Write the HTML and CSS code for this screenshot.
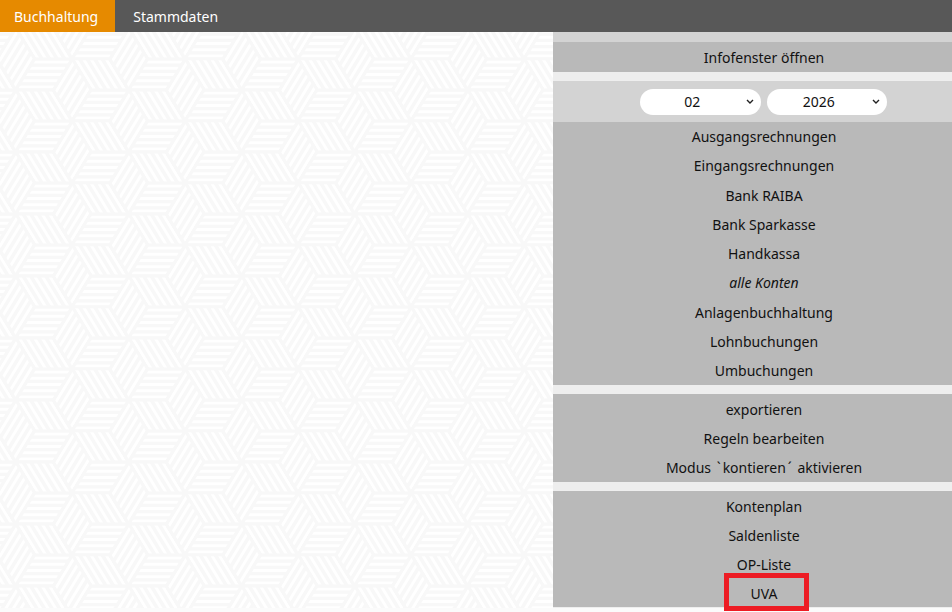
FILE: index.html
```html
<!DOCTYPE html>
<html lang="de">
<head>
<meta charset="utf-8">
<title>Buchhaltung</title>
<link rel="stylesheet" href="styles.css">
</head>
<body>
<nav class="topbar">
  <a class="tab tab-active">Buchhaltung</a>
  <a class="tab">Stammdaten</a>
</nav>
<main class="main">
  <div class="canvas">
    <svg class="pattern-svg" xmlns="http://www.w3.org/2000/svg" aria-hidden="true">
      <defs>
        <clipPath id="ch"><polygon points="0,0 37.67,0 18.83,31 -18.83,31"/></clipPath>
        <clipPath id="cb"><polygon points="37.67,0 75.33,0 94.17,31 56.5,31"/></clipPath>
        <clipPath id="cd"><polygon points="75.33,0 94.17,-31 113,0 94.17,31"/></clipPath>
        <g id="cell">
          <g clip-path="url(#ch)" class="stripes">
            <path d="M-20 3.1H40M-20 9.3H40M-20 15.5H40M-20 21.7H40M-20 27.9H40"/>
          </g>
          <g clip-path="url(#cb)" class="stripes">
            <path d="M41.4 0l18.83 31M48.95 0l18.83 31M56.5 0l18.83 31M64.05 0l18.83 31M71.6 0l18.83 31"/>
          </g>
          <g clip-path="url(#cd)" class="stripes">
            <path d="M77.2 3.1l18.83 -31M81 9.3l18.83 -31M84.75 15.5l18.83 -31M88.5 21.7l18.83 -31M92.3 27.9l18.83 -31"/>
          </g>
          <polygon class="edge" points="0,0 37.67,0 18.83,31 -18.83,31"/>
          <polygon class="edge" points="37.67,0 75.33,0 94.17,31 56.5,31"/>
          <polygon class="edge" points="75.33,0 94.17,-31 113,0 94.17,31"/>
        </g>
        <pattern id="cubes" patternUnits="userSpaceOnUse" x="91" y="58" width="113" height="62">
          <rect class="pattern-base" width="113" height="62"/>
          <use href="#cell" x="0" y="0"/>
          <use href="#cell" x="-113" y="0"/>
          <use href="#cell" x="113" y="0"/>
          <use href="#cell" x="56.5" y="31"/>
          <use href="#cell" x="-56.5" y="31"/>
          <use href="#cell" x="56.5" y="-31"/>
          <use href="#cell" x="-56.5" y="-31"/>
          <use href="#cell" x="0" y="62"/>
          <use href="#cell" x="-113" y="62"/>
          <use href="#cell" x="113" y="62"/>
          <use href="#cell" x="0" y="-62"/>
          <use href="#cell" x="-113" y="-62"/>
          <use href="#cell" x="56.5" y="93"/>
          <use href="#cell" x="-56.5" y="93"/>
        </pattern>
      </defs>
      <rect width="100%" height="100%" fill="url(#cubes)"/>
    </svg>
  </div>
  <aside class="panel">
    <div class="strip-top"></div>
    <section class="group group-info"><div class="row">Infofenster öffnen</div></section>
    <div class="period">
      <div class="select-wrap">
        <select class="select"><option>02</option></select>
        <svg class="chevron" viewBox="0 0 8 5"><path d="M1 1l3 3 3-3"/></svg>
      </div>
      <div class="select-wrap">
        <select class="select"><option>2026</option></select>
        <svg class="chevron" viewBox="0 0 8 5"><path d="M1 1l3 3 3-3"/></svg>
      </div>
    </div>
    <section class="group">
      <div class="row">Ausgangsrechnungen</div>
      <div class="row">Eingangsrechnungen</div>
      <div class="row">Bank RAIBA</div>
      <div class="row">Bank Sparkasse</div>
      <div class="row">Handkassa</div>
      <div class="row row-italic">alle Konten</div>
      <div class="row">Anlagenbuchhaltung</div>
      <div class="row">Lohnbuchungen</div>
      <div class="row">Umbuchungen</div>
    </section>
    <section class="group group-spaced">
      <div class="row">exportieren</div>
      <div class="row">Regeln bearbeiten</div>
      <div class="row"><span>Modus <span class="accent">`</span>kontieren<span class="accent">´</span> aktivieren</span></div>
    </section>
    <section class="group group-spaced group-last">
      <div class="row">Kontenplan</div>
      <div class="row">Saldenliste</div>
      <div class="row">OP-Liste</div>
      <div class="row">UVA</div>
    </section>
  </aside>
</main>
<div class="highlight"></div>
</body>
</html>
```

FILE: styles.css
```css
* { box-sizing: border-box; }
html, body { margin: 0; height: 100%; overflow: hidden; }
body {
  position: relative;
  display: flex;
  flex-direction: column;
  background: #fbfbfb;
  font-family: "Noto Sans", "Open Sans", sans-serif;
  font-size: 14px;
  color: #111;
}
.topbar {
  display: flex;
  gap: 4px;
  height: 32px;
  flex: none;
  background: #585858;
}
.tab {
  display: flex;
  align-items: center;
  padding: 0 17px 0 14px;
  color: #fff;
}
.tab-active { background: #e68a00; }
.main {
  display: flex;
  height: 576px;
  flex: none;
}
.canvas { flex: 1; min-width: 0; }
.pattern-svg { display: block; width: 100%; height: 100%; }
.pattern-base { fill: #f8f8f8; }
.stripes path { fill: none; stroke: #fff; stroke-width: 3; }
.edge { fill: none; stroke: #f8f8f8; stroke-width: 2.5; }
.panel {
  width: 399px;
  flex: none;
  background: #eee;
}
.strip-top { height: 10px; background: #d3d3d3; }
.group { background: #b9b9b9; }
.group-spaced { margin-top: 9px; }
.row {
  height: 29.25px;
  padding: 0 0 0 23px;
  display: flex;
  align-items: center;
  justify-content: center;
}
.group-info .row { height: 30px; }
.group-spaced .row { padding-top: 1px; }
.group-last .row { height: 29px; padding-top: 2px; }
.row-italic { font-style: italic; }
.accent { padding: 0 2px; }
.period {
  display: flex;
  justify-content: center;
  gap: 6px;
  height: 41px;
  margin-top: 9px;
  padding: 8px 0 7px 22px;
  background: #d3d3d3;
}
.select-wrap { position: relative; width: 120.5px; height: 26px; }
.select {
  width: 100%;
  height: 100%;
  appearance: none;
  border: 0;
  border-radius: 13px;
  background: #fff;
  font: inherit;
  color: #111;
  text-align: center;
  text-align-last: center;
  padding: 0 16px 2px 0;
}
.chevron {
  position: absolute;
  right: 7px;
  top: 10px;
  width: 8px;
  height: 5px;
  pointer-events: none;
}
.chevron path { fill: none; stroke: #222; stroke-width: 1.4; }
.highlight {
  position: absolute;
  left: 724px;
  top: 573px;
  width: 85px;
  height: 38px;
  border: 5px solid #ed1c24;
}
```
